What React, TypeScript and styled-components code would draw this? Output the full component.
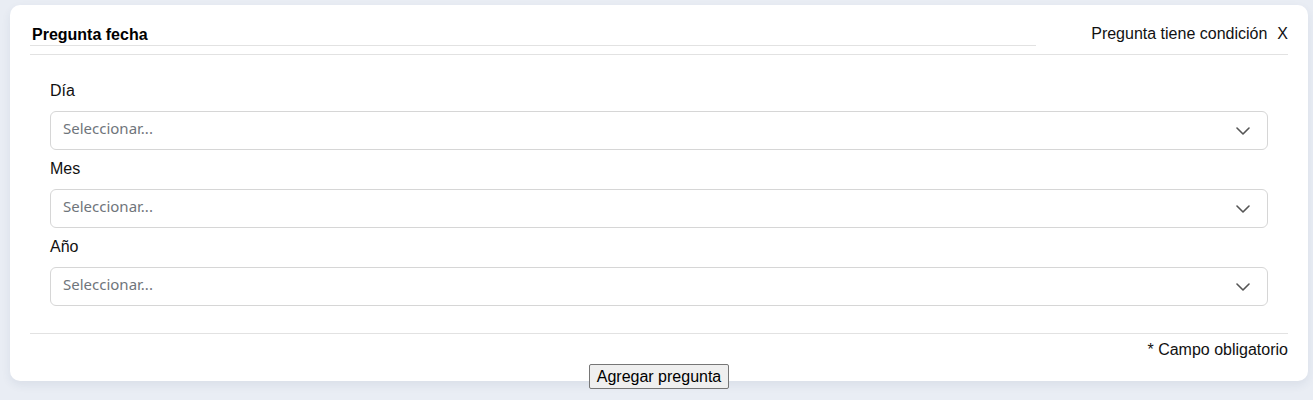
import React from 'react';
import styled, { createGlobalStyle } from 'styled-components';

const GlobalStyle = createGlobalStyle`
  html, body {
    margin: 0;
    min-height: 400px;
    background: #e9edf4;
    font-family: "Liberation Sans", Arial, sans-serif;
    color: #212529;
  }
`;

const Page = styled.div`
  min-height: 400px;
  box-sizing: border-box;
  padding: 5px 5px 0 10px;
`;

const Card = styled.div`
  height: 376px;
  box-sizing: border-box;
  background: #fff;
  border-radius: 10px;
  padding: 0 20px;
  box-shadow: 0 4px 10px rgba(40, 60, 100, 0.08);
`;

const Header = styled.div`
  display: flex;
  justify-content: space-between;
  align-items: flex-start;
  padding: 20px 0 8px;
  border-bottom: 1px solid #e2e2e2;
`;

const Title = styled.h2`
  width: 80%;
  margin: 0;
  padding-left: 2px;
  box-sizing: border-box;
  font-size: 16px;
  font-weight: bold;
  line-height: 20px;
  color: #000;
  border-bottom: 1px solid #e2e2e2;
`;

const Condition = styled.div`
  font-size: 16px;
  line-height: 18px;
  color: #111;
`;

const Close = styled.span`
  margin-left: 10px;
  cursor: pointer;
`;

const Fields = styled.div`
  padding: 24px 20px 0;
`;

const Label = styled.label<{ $first?: boolean }>`
  display: block;
  margin: ${({ $first }) => ($first ? '0' : '7px')} 0 8px;
  font-size: 16px;
  line-height: 24px;
  color: #111;
`;

const SelectBox = styled.div`
  height: 39px;
  box-sizing: border-box;
  display: flex;
  align-items: center;
  justify-content: space-between;
  padding: 0 17px 0 12px;
  border: 1px solid #d6d6d6;
  border-radius: 6px;
  background: #fff;
`;

const Placeholder = styled.span`
  margin-top: -5px;
  font-family: "Noto Sans", "Open Sans", sans-serif;
  font-size: 15px;
  color: #6f757b;
`;

const Footer = styled.div`
  margin-top: 27px;
  padding-top: 7px;
  border-top: 1px solid #e2e2e2;
  text-align: right;
  font-size: 16px;
  line-height: 18px;
  color: #111;
`;

const ButtonRow = styled.div`
  display: flex;
  justify-content: center;
  margin-top: 5px;
`;

const AddButton = styled.button`
  position: relative;
  font-family: "Liberation Sans", Arial, sans-serif;
  font-size: 16px;
  line-height: 19px;
  padding: 2px 7px;
  color: #000;
  background: #efefef;
  border: 1px solid #767676;
  border-radius: 2px;
`;

const Chevron = (): JSX.Element => (
  <svg width="14" height="8" viewBox="0 0 14 8" fill="none">
    <path d="M1 1l6 6 6-6" stroke="#555" strokeWidth="1.6" strokeLinecap="round" strokeLinejoin="round" />
  </svg>
);

const fields = ['Día', 'Mes', 'Año'];

const App = (): JSX.Element => (
  <Page>
    <GlobalStyle />
    <Card>
      <Header>
        <Title>Pregunta fecha</Title>
        <Condition>
          Pregunta tiene condición
          <Close>X</Close>
        </Condition>
      </Header>
      <Fields>
        {fields.map((name, index) => (
          <div key={name}>
            <Label $first={index === 0}>{name}</Label>
            <SelectBox>
              <Placeholder>Seleccionar...</Placeholder>
              <Chevron />
            </SelectBox>
          </div>
        ))}
      </Fields>
      <Footer>* Campo obligatorio</Footer>
      <ButtonRow>
        <AddButton type="button">Agregar pregunta</AddButton>
      </ButtonRow>
    </Card>
  </Page>
);

export default App;
